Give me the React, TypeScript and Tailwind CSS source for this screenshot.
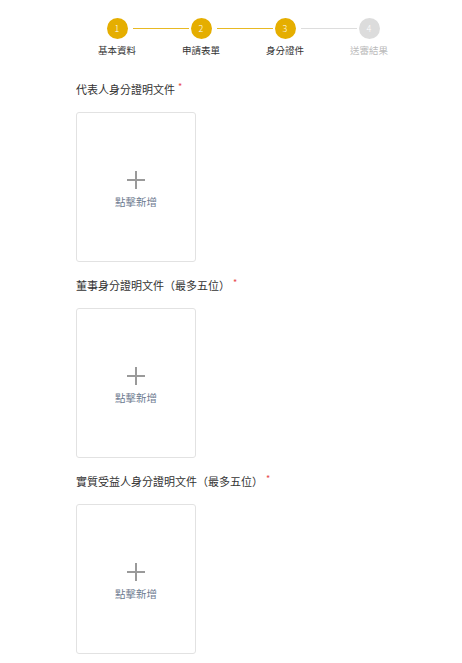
const steps = [
  { n: 1, label: '基本資料', done: true },
  { n: 2, label: '申請表單', done: true },
  { n: 3, label: '身分證件', done: true },
  { n: 4, label: '送審結果', done: false },
];

const sections = [
  '代表人身分證明文件',
  '董事身分證明文件（最多五位）',
  '實質受益人身分證明文件（最多五位）',
];

const Stepper = () => (
  <div className="ml-[75px] flex w-[336px] pt-[18px]">
    {steps.map((s, i) => (
      <div key={s.n} className="relative flex w-[84px] flex-col items-center">
        {i < steps.length - 1 && (
          <div
            className={`absolute left-[58px] top-[10px] h-px w-[56px] ${
              steps[i + 1].done ? 'bg-[#e8b923]' : 'bg-[#dddddd]'
            }`}
          />
        )}
        <div
          className={`flex h-[21px] w-[21px] items-center justify-center rounded-full text-[9px] font-light text-white ${
            s.done ? 'bg-[#e5ae00]' : 'bg-[#dcdcdc]'
          }`}
        >
          {s.n}
        </div>
        <div className={`mt-[5px] text-[9.5px] leading-[12px] ${s.done ? 'text-[#333333]' : 'text-[#bbbbbb]'}`}>
          {s.label}
        </div>
      </div>
    ))}
  </div>
);

const UploadBox = () => (
  <button className="flex h-[150px] w-[120px] flex-col items-center justify-center rounded-[3px] border border-[#e2e2e2] bg-white">
    <svg width="20" height="20" viewBox="0 0 20 20" className="mt-[4px]">
      <path d="M10 1v18M1 10h18" stroke="#9a9a9a" strokeWidth="2" fill="none" />
    </svg>
    <span className="mt-[6px] text-[10.5px] leading-[12px] text-[#6d7a8f]">點擊新增</span>
  </button>
);

export default function App() {
  return (
    <div
      className="min-h-screen w-[462px] bg-white"
      style={{ fontFamily: '"Noto Sans CJK TC", "Noto Sans", sans-serif' }}
    >
      <Stepper />
      <div className="ml-[76px] mt-[25px] flex flex-col">
        {sections.map((title) => (
          <div key={title} className="flex flex-col pb-[15px]">
            <div className="flex items-start text-[11px] leading-[16px] text-[#333333]">
              <span>{title}</span>
              <span className="ml-[3px] text-[9px] leading-[12px] text-[#e84a4a]">*</span>
            </div>
            <div className="mt-[15px]">
              <UploadBox />
            </div>
          </div>
        ))}
      </div>
    </div>
  );
}
